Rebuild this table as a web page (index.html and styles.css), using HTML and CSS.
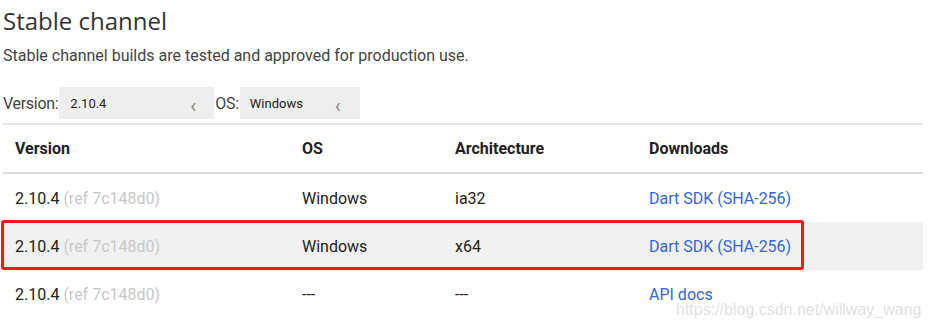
FILE: index.html
```html
<!DOCTYPE html>
<html lang="en">
<head>
    <meta charset="UTF-8">
    <title>Stable channel</title>
    <link rel="stylesheet" href="styles.css">
</head>
<body>
    <div class="container">
        <h1>Stable channel</h1>
        <p class="intro">Stable channel builds are tested and approved for production use.</p>

        <!-- version / os pickers -->
        <div class="filters">
            <span class="filter-label">Version:</span>
            <div class="select select-version"><span>2.10.4</span><span class="chev">&lsaquo;</span></div>
            <span class="filter-label">OS:</span>
            <div class="select select-os"><span>Windows</span><span class="chev">&lsaquo;</span></div>
        </div>

        <div class="table-wrap">
            <table class="builds">
                <thead>
                    <tr>
                        <th class="c-version">Version</th>
                        <th class="c-os">OS</th>
                        <th class="c-arch">Architecture</th>
                        <th>Downloads</th>
                    </tr>
                </thead>
                <tbody>
                    <tr>
                        <td>2.10.4 <span class="ref">(ref 7c148d0)</span></td>
                        <td>Windows</td>
                        <td>ia32</td>
                        <td><a href="#">Dart SDK</a> <a href="#">(SHA-256)</a></td>
                    </tr>
                    <tr class="picked">
                        <td>2.10.4 <span class="ref">(ref 7c148d0)</span></td>
                        <td>Windows</td>
                        <td>x64</td>
                        <td><a href="#">Dart SDK</a> <a href="#">(SHA-256)</a></td>
                    </tr>
                    <tr>
                        <td>2.10.4 <span class="ref">(ref 7c148d0)</span></td>
                        <td>---</td>
                        <td>---</td>
                        <td><a href="#">API docs</a></td>
                    </tr>
                </tbody>
            </table>
            <div class="highlight"></div>
            <div class="watermark">https://blog.csdn.net/willway_wang</div>
        </div>
    </div>
</body>
</html>
```

FILE: styles.css
```css
body {
    margin: 0;
    background: #fff;
    font-family: Roboto, "Noto Sans", sans-serif;
    color: #212121;
}
.container {
    padding: 0 6px 0 3px;
}
h1 {
    margin: 0;
    padding-top: 5px;
    font-size: 24px;
    line-height: 32px;
    font-weight: 400;
    color: #333;
    font-family: "Open Sans", Roboto, sans-serif;
}
.intro {
    margin: 7px 0 0;
    font-size: 16px;
    line-height: 24px;
    color: #444;
}
.filters {
    display: flex;
    align-items: center;
    margin-top: 19px;
    height: 32px;
}
.filter-label {
    font-size: 16px;
    color: #444;
    letter-spacing: -0.3px;
}
.select {
    display: flex;
    align-items: center;
    justify-content: space-between;
    height: 32px;
    background: #eee;
    font-size: 13px;
    color: #222;
    padding: 0 18px 0 11px;
    box-sizing: border-box;
}
.select-version {
    width: 155px;
    margin-left: 1px;
    margin-right: 1px;
}
.select-os {
    width: 120px;
    margin-left: 1px;
    padding-left: 10px;
    padding-right: 19px;
}
.chev {
    font-size: 20px;
    line-height: 20px;
    color: #888;
    padding-top: 6px;
}
.table-wrap {
    position: relative;
    margin-top: 4px;
}
.builds {
    width: 920px;
    border-collapse: collapse;
    font-size: 16px;
}
.builds thead tr {
    border-top: 2px solid #e6e6e6;
    border-bottom: 2px solid #dadce0;
}
.builds th {
    text-align: left;
    font-weight: 700;
    color: #202124;
    height: 47px;
    padding: 0 12px;
}
.builds td {
    height: 48px;
    padding: 0 12px;
}
.c-version { width: 263px; }
.c-os { width: 129px; }
.c-arch { width: 170px; }
.ref {
    color: #c8c8c8;
}
.builds a {
    color: #3367d6;
    text-decoration: none;
}
.picked {
    background: #f1f1f1;
}
.highlight {
    position: absolute;
    left: -2px;
    top: 97px;
    width: 803px;
    height: 50px;
    border: 3px solid #f0191a;
    border-radius: 3px;
    box-sizing: border-box;
}
.watermark {
    position: absolute;
    left: 673px;
    top: 178px;
    font-size: 16px;
    font-family: "Liberation Sans", Arial, sans-serif;
    color: rgba(200, 200, 200, 0.55);
    white-space: nowrap;
}
```
